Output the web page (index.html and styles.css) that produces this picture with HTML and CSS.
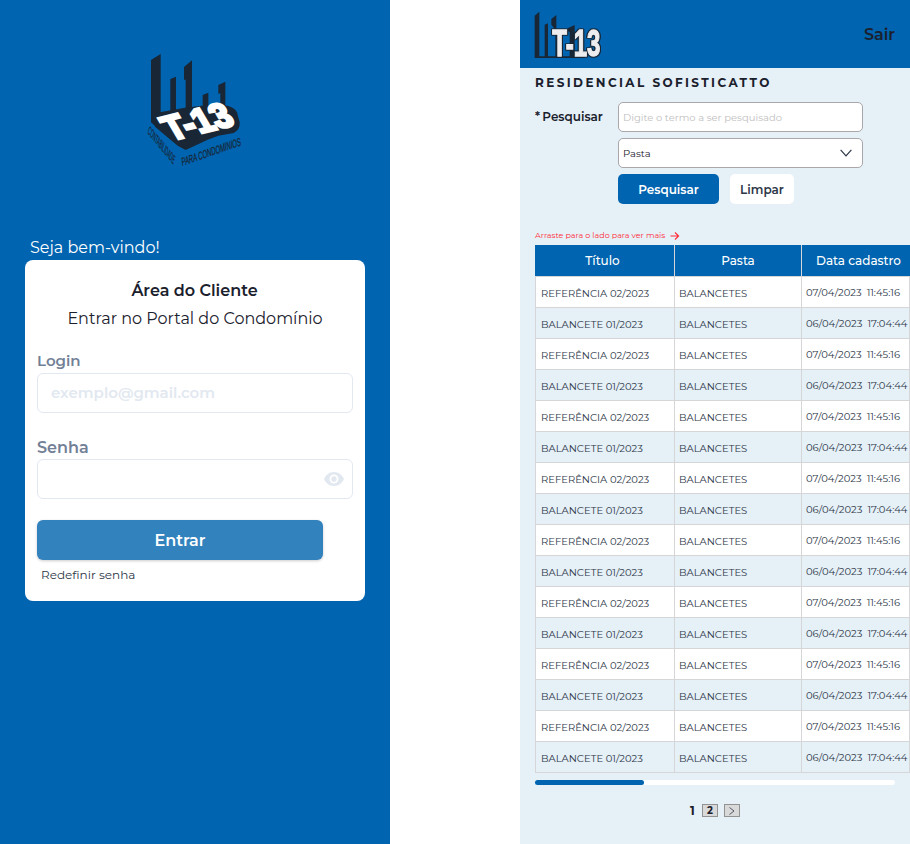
FILE: index.html
```
<!DOCTYPE html>
<html lang="pt-BR">
<head>
<meta charset="utf-8">
<title>T-13 Contabilidade</title>
<link rel="stylesheet" href="styles.css">
</head>
<body>
<main class="screens">
  <section class="login">
    <svg class="login-logo" viewBox="0 0 360 390" role="img" aria-label="T-13">
      <g fill="#182635">
        <path d="M48 45L77 27V215L60 243L48 232Z"/>
        <path d="M106 102L123 95V210H106ZM147 66L171 46V200H152V103L147 106ZM203 150L220 143V190H203ZM250 120L271 110V195H256V144L250 147Z"/>
        <path d="M56 225Q54 203 75 202L150 188L240 178Q305 180 308 210L314 232Q316 254 296 264L250 272L218 284L152 315L128 302L60 245Z"/>
      </g>
      <g class="logo-mark" transform="matrix(.97 -.24 .65 1.1 108 287)">
        <text x="0" y="0" textLength="202" lengthAdjust="spacingAndGlyphs">T-13</text>
      </g>
      <g class="logo-tagline">
        <text transform="matrix(.64 .77 -.3 .95 37 264)" textLength="122" lengthAdjust="spacingAndGlyphs">CONTABILIDADE</text>
        <text transform="matrix(.945 -.33 .1 1 141 363)" textLength="188" lengthAdjust="spacingAndGlyphs">PARA CONDOMINIOS</text>
      </g>
    </svg>
    <p class="welcome">Seja bem-vindo!</p>
    <form class="card">
      <h1 class="card-title">Área do Cliente</h1>
      <p class="card-subtitle">Entrar no Portal do Condomínio</p>
      <label class="field-label login-label">Login</label>
      <div class="field"><span class="field-hint">exemplo@gmail.com</span></div>
      <label class="field-label senha-label">Senha</label>
      <div class="field field-password">
        <svg class="eye" viewBox="0 0 20 14"><path fill="#e2e8f0" fill-rule="evenodd" d="M10 0C5.500 0 1.700 2.800 0 7c1.700 4.200 5.500 7 10 7s8.300-2.800 10-7C18.300 2.800 14.500 0 10 0ZM10 11.500a4.500 4.500 0 1 1 0-9 4.500 4.500 0 0 1 0 9ZM10 4.300a2.700 2.700 0 1 0 0 5.400 2.700 2.700 0 0 0 0-5.400Z"/></svg>
      </div>
      <button class="enter" type="button">Entrar</button>
      <a class="reset">Redefinir senha</a>
    </form>
  </section>

  <section class="portal">
    <header class="topbar">
      <svg class="top-logo" viewBox="0 0 210 150" role="img" aria-label="T-13">
        <path fill="#182635" d="M5 20L19 8V142H35V47L45 43V142H67V62L55 47V30L70 18V142H110V70L104 65V58L125 48V142H155V147H5Z"/>
        <text class="top-mark" x="58" y="140" textLength="144" lengthAdjust="spacingAndGlyphs">T-13</text>
      </svg>
      <a class="logout">Sair</a>
    </header>
    <h2 class="residence">RESIDENCIAL SOFISTICATTO</h2>
    <form class="search">
      <label class="search-label">* Pesquisar</label>
      <div class="controls">
        <div class="control"><span class="control-hint">Digite o termo a ser pesquisado</span></div>
        <div class="control"><span class="control-value">Pasta</span>
          <svg class="chevron" viewBox="0 0 12 8"><path d="M.6.8L6 6.800L11.400.8"/></svg>
        </div>
        <div class="actions">
          <button class="btn btn-primary" type="button">Pesquisar</button>
          <button class="btn btn-clear" type="button">Limpar</button>
        </div>
      </div>
    </form>
    <p class="drag"><span class="drag-text">Arraste para o lado para ver mais</span>
      <svg class="arrow" viewBox="0 0 10 8"><path d="M.5 4H8.500M5 .5L8.600 4L5 7.500"/></svg>
    </p>
    <div class="table">
      <div class="row head"><span class="th">Título</span><span class="th">Pasta</span><span class="th th-date">Data cadastro</span></div>
      <div class="row"><span class="ref">REFERÊNCIA 02/2023</span><span class="folder">BALANCETES</span><span class="date"><span class="day">07/04/2023</span><span class="hour">11:45:16</span></span></div>
      <div class="row"><span class="bal">BALANCETE 01/2023</span><span class="folder">BALANCETES</span><span class="date"><span class="day">06/04/2023</span><span class="hour">17:04:44</span></span></div>
      <div class="row"><span class="ref">REFERÊNCIA 02/2023</span><span class="folder">BALANCETES</span><span class="date"><span class="day">07/04/2023</span><span class="hour">11:45:16</span></span></div>
      <div class="row"><span class="bal">BALANCETE 01/2023</span><span class="folder">BALANCETES</span><span class="date"><span class="day">06/04/2023</span><span class="hour">17:04:44</span></span></div>
      <div class="row"><span class="ref">REFERÊNCIA 02/2023</span><span class="folder">BALANCETES</span><span class="date"><span class="day">07/04/2023</span><span class="hour">11:45:16</span></span></div>
      <div class="row"><span class="bal">BALANCETE 01/2023</span><span class="folder">BALANCETES</span><span class="date"><span class="day">06/04/2023</span><span class="hour">17:04:44</span></span></div>
      <div class="row"><span class="ref">REFERÊNCIA 02/2023</span><span class="folder">BALANCETES</span><span class="date"><span class="day">07/04/2023</span><span class="hour">11:45:16</span></span></div>
      <div class="row"><span class="bal">BALANCETE 01/2023</span><span class="folder">BALANCETES</span><span class="date"><span class="day">06/04/2023</span><span class="hour">17:04:44</span></span></div>
      <div class="row"><span class="ref">REFERÊNCIA 02/2023</span><span class="folder">BALANCETES</span><span class="date"><span class="day">07/04/2023</span><span class="hour">11:45:16</span></span></div>
      <div class="row"><span class="bal">BALANCETE 01/2023</span><span class="folder">BALANCETES</span><span class="date"><span class="day">06/04/2023</span><span class="hour">17:04:44</span></span></div>
      <div class="row"><span class="ref">REFERÊNCIA 02/2023</span><span class="folder">BALANCETES</span><span class="date"><span class="day">07/04/2023</span><span class="hour">11:45:16</span></span></div>
      <div class="row"><span class="bal">BALANCETE 01/2023</span><span class="folder">BALANCETES</span><span class="date"><span class="day">06/04/2023</span><span class="hour">17:04:44</span></span></div>
      <div class="row"><span class="ref">REFERÊNCIA 02/2023</span><span class="folder">BALANCETES</span><span class="date"><span class="day">07/04/2023</span><span class="hour">11:45:16</span></span></div>
      <div class="row"><span class="bal">BALANCETE 01/2023</span><span class="folder">BALANCETES</span><span class="date"><span class="day">06/04/2023</span><span class="hour">17:04:44</span></span></div>
      <div class="row"><span class="ref">REFERÊNCIA 02/2023</span><span class="folder">BALANCETES</span><span class="date"><span class="day">07/04/2023</span><span class="hour">11:45:16</span></span></div>
      <div class="row"><span class="bal">BALANCETE 01/2023</span><span class="folder">BALANCETES</span><span class="date"><span class="day">06/04/2023</span><span class="hour">17:04:44</span></span></div>
    </div>
    <div class="scroll"><div class="thumb"></div></div>
    <nav class="pages">
      <span class="page-current">1</span>
      <a class="page">2</a>
      <a class="page"><svg class="next" viewBox="0 0 6 8"><path d="M.5.5L5 4L.5 7.500"/></svg></a>
    </nav>
  </section>
</main>
</body>
</html>
```
FILE: styles.css
```
* { box-sizing: border-box; margin: 0; padding: 0; }
body {
  width: 910px; height: 844px; overflow: hidden; background: #fff;
  font-family: Montserrat, Inter, "Liberation Sans", sans-serif; color: #1a202c;
}
button { border: 0; font-family: inherit; }
span, p, a, h1, h2, label, button { white-space: nowrap; }
.screens { display: flex; gap: 130px; }
.login, .portal { width: 390px; height: 844px; flex: none; }

.login { background: #0064b0; padding: 45px 25px 0; }
.login-logo { display: block; width: 120px; height: 130px; margin-left: 110px; overflow: visible; }
.logo-mark text {
  font: 700 88px "Liberation Sans", sans-serif; fill: #fff; stroke: #fff; stroke-width: 7px;
}
.logo-tagline text { font: 34px "Liberation Sans Narrow", "Liberation Sans", sans-serif; fill: #182635; stroke: #182635; stroke-width: .8px; }
.welcome { margin: 61px 0 0 5px; height: 24px; line-height: 24px; font-size: 16px; font-weight: 400; color: #fff; }
.card { width: 340px; height: 341px; background: #fff; border-radius: 8px; padding: 19px 12px 0; display: flex; flex-direction: column; }
.card-title { font-size: 16px; line-height: 24px; font-weight: 600; text-align: center; padding-right: 1px; }
.card-subtitle { margin-top: 4px; font-size: 16px; line-height: 24px; font-weight: 400; text-align: center; }
.field-label { color: #718096; font-size: 15px; line-height: 20px; font-weight: 600; }
.login-label { margin-top: 20px; }
.senha-label { margin-top: 25px; font-size: 16px; }
.field { height: 40px; margin-top: 2px; width: 316px; border: 1px solid #e2e8f0; border-radius: 6px; display: flex; align-items: center; padding: 0 8px 0 13px; }
.field-password { justify-content: flex-end; margin-top: 1px; }
.field-hint { font-size: 15px; font-weight: 600; color: #e2e8f0; padding-bottom: 1px; }
.eye { width: 20px; height: 14px; }
.enter { margin-top: 21px; width: 286px; height: 40px; border-radius: 6px; background: #3182bd; color: #fff; font-size: 16px; font-weight: 600; box-shadow: 0 1px 3px rgba(0,0,0,.2); }
.reset { margin: 6px 0 0 4px; font-size: 12px; line-height: 18px; color: #2d3748; }

.portal { background: #e5f0f7; padding: 0 0 0 15px; overflow: hidden; }
.topbar { height: 68px; margin-left: -15px; background: #0064b0; padding: 9px 15px 0 13px; display: flex; justify-content: space-between; }
.top-logo { width: 70px; height: 50px; overflow: visible; }
.top-mark {
  font: 700 108px "Liberation Sans", sans-serif; fill: #ededf0; stroke: #ededf0; stroke-width: 4px;
  filter: drop-shadow(2px 0 0 #182635) drop-shadow(-2px 0 0 #182635) drop-shadow(0 2px 0 #182635) drop-shadow(0 -2px 0 #182635);
}
.logout { font-size: 16px; line-height: 24px; font-weight: 600; margin-top: 14px; }
.residence { height: 34px; line-height: 30px; font-size: 12px; font-weight: 700; letter-spacing: 2.4px; }
.search { display: flex; height: 127px; }
.search-label { width: 83px; font-size: 12px; line-height: 30px; font-weight: 600; word-spacing: -1px; }
.controls { display: flex; flex-direction: column; gap: 6px; }
.control { width: 245px; height: 30px; border: 1px solid #aaa6aa; border-radius: 5px; background: #fff; display: flex; align-items: center; justify-content: space-between; padding: 0 10px 0 4px; font-size: 10px; }
.control-hint { color: #c0c0c0; font-weight: 400; }
.chevron { width: 12px; height: 8px; }
.chevron path, .arrow path, .next path { fill: none; stroke: #2d3748; stroke-width: 1.2; }
.actions { display: flex; gap: 11px; }
.btn { height: 30px; border-radius: 5px; font-size: 12px; font-weight: 600; }
.btn-primary { width: 101px; background: #0064b0; color: #fff; }
.btn-clear { width: 64px; background: #fff; color: #2d3748; }
.drag { display: flex; align-items: center; gap: 5px; height: 12px; margin-bottom: 4px; color: #ff2b36; font-size: 8px; }
.arrow { width: 10px; height: 8px; margin-top: 1px; }
.arrow path { stroke: #ff2b36; stroke-width: 1.1; }
.table { width: 375px; border-bottom: 1px solid #d6d6d8; }
.row { display: grid; grid-template-columns: 139px 127px 108px; height: 31px; border-top: 1px solid #d6d6d8; background: #fff; border-left: 1px solid #d6d6d8; font-size: 10px; line-height: 33px; color: #2d3748; }
.row:nth-child(odd) { background: #e5f0f7; }
.row > span { border-right: 1px solid #d6d6d8; height: 30px; padding-left: 4px; }
.row > span:first-child { padding-left: 5px; }
.row.head { background: #0064b0; border-top: 0; border-left: 0; grid-template-columns: 140px 127px 108px; color: #fff; font-size: 12px; font-weight: 500; line-height: 32px; }
.row > .th, .row > .th:first-child { height: 31px; padding-left: 0; text-align: center; }
.row > .th:first-child { padding-right: 4px; }
.row > .th-date { border-right: 0; padding-left: 5px; }
.row > .date { line-height: 31px; display: flex; gap: 5px; }
.scroll { margin-top: 7px; width: 360px; height: 5px; background: #fff; border-radius: 3px; }
.thumb { width: 109px; height: 5px; background: #0064b0; border-radius: 3px; }
.pages { display: flex; align-items: center; margin: 19px 0 0 155px; height: 13px; font-size: 12px; font-weight: 700; }
.page-current { width: 12px; }
.page { width: 16px; height: 13px; border: 1px solid #929292; background: #d9d9d9; margin-right: 6px; display: flex; align-items: center; justify-content: center; font-size: 10px; }
.next { width: 6px; height: 8px; }
.next path { stroke-width: .8; }
```
